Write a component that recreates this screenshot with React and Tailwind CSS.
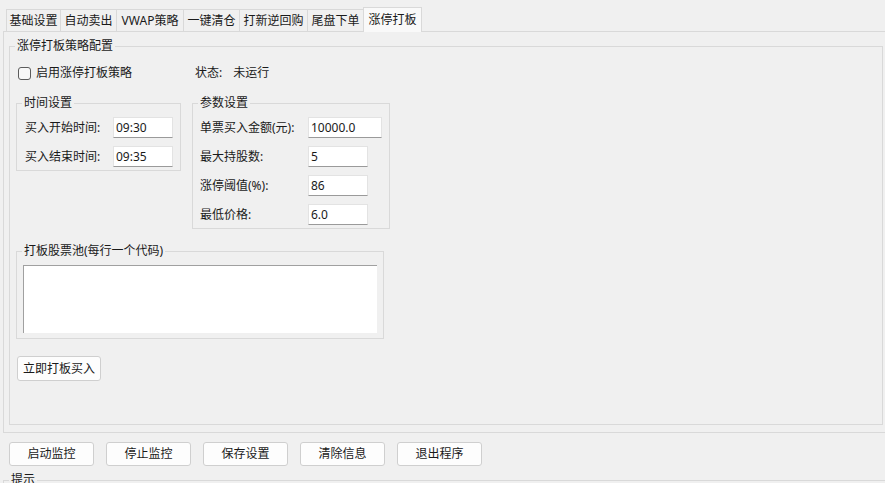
import React from "react";

const tabs = [
  { label: "基础设置", w: "w-[55px]" },
  { label: "自动卖出", w: "w-[57px]" },
  { label: "VWAP策略", w: "w-[68px]" },
  { label: "一键清仓", w: "w-[57px]" },
  { label: "打新逆回购", w: "w-[69px]" },
  { label: "尾盘下单", w: "w-[57px]" },
];

const Field = ({ value, w }) => (
  <div className={`${w} h-[21px] bg-white border border-[#e3e3e3] border-b-[#9a9a9a] pl-[2px] flex items-center text-[12px] text-[#1a1a1a]`}>
    {value}
  </div>
);

const Group = ({ title, className, children }) => (
  <fieldset className={`border border-[#d9d9d9] ${className}`}>
    <legend className="ml-[5px] px-[2px] leading-[16px] text-[12px] text-[#1a1a1a]">{title}</legend>
    {children}
  </fieldset>
);

const Btn = ({ children, className }) => (
  <button className={`h-[24px] rounded-[3px] border border-[#cfcfcf] bg-[#fdfdfd] text-[12px] text-[#1a1a1a] flex items-center justify-center ${className}`}>
    {children}
  </button>
);

export default function App() {
  return (
    <div className="w-[885px] h-[483px] overflow-hidden bg-[#f0f0f0] text-[#1a1a1a] text-[12px] font-['Noto_Sans','Noto_Sans_CJK_SC',sans-serif]">
      {/* tab strip */}
      <div className="h-[31px] flex items-end pl-[6px] relative z-10">
        {tabs.map((t) => (
          <div
            key={t.label}
            className={`${t.w} h-[22px] -mr-px border border-b-0 border-[#d9d9d9] bg-[#f0f0f0] flex items-center justify-center leading-none`}
          >
            {t.label}
          </div>
        ))}
        <div className="w-[59px] h-[25px] -mb-px border border-b-0 border-[#d9d9d9] bg-[#f9f9f9] flex items-center justify-center leading-none">
          涨停打板
        </div>
      </div>

      {/* pane */}
      <div className="ml-[3px] h-[402px] border-l border-t border-b border-[#d9d9d9] pt-[6px] pl-[5px]">
        <Group title="涨停打板策略配置" className="w-[874px] h-[387px]">
          <div className="pl-[6px]">
            <div className="h-[20px] mt-[9px] ml-[2px] flex items-center">
              <div className="w-[13px] h-[13px] rounded-[3px] border border-[#5c5c5c] bg-[#f8f8f8]" />
              <span className="ml-[5px] leading-none">启用涨停打板策略</span>
              <span className="ml-[63px] leading-none">状态:</span>
              <span className="ml-[11px] leading-none">未运行</span>
            </div>

            <div className="mt-[12px] flex items-start gap-[11px]">
              <Group title="时间设置" className="w-[165px]">
                <div className="pt-[6px] pb-[3px] pl-[8px] flex flex-col gap-[8px]">
                  <div className="flex items-center">
                    <span className="w-[88px]">买入开始时间:</span>
                    <Field value="09:30" w="w-[60px]" />
                  </div>
                  <div className="flex items-center">
                    <span className="w-[88px]">买入结束时间:</span>
                    <Field value="09:35" w="w-[60px]" />
                  </div>
                </div>
              </Group>

              <Group title="参数设置" className="w-[198px]">
                <div className="pt-[6px] pb-[3px] pl-[7px] flex flex-col gap-[8px]">
                  <div className="flex items-center">
                    <span className="w-[108px]">单票买入金额(元):</span>
                    <Field value="10000.0" w="w-[74px]" />
                  </div>
                  <div className="flex items-center">
                    <span className="w-[108px]">最大持股数:</span>
                    <Field value="5" w="w-[60px]" />
                  </div>
                  <div className="flex items-center">
                    <span className="w-[108px]">涨停阈值(%):</span>
                    <Field value="86" w="w-[60px]" />
                  </div>
                  <div className="flex items-center">
                    <span className="w-[108px]">最低价格:</span>
                    <Field value="6.0" w="w-[60px]" />
                  </div>
                </div>
              </Group>
            </div>

            <Group title="打板股票池(每行一个代码)" className="mt-[14px] w-[368px]">
              <div className="pt-[6px] pb-[5px] pl-[6px]">
                <div className="w-[354px] h-[68px] bg-white border-l border-t border-[#a0a0a0]" />
              </div>
            </Group>

            <button className="mt-[17px] ml-px w-[84px] h-[25px] rounded-[3px] border border-[#cfcfcf] bg-[#fdfdfd] text-[12px] flex items-center justify-center">
              立即打板买入
            </button>
          </div>
        </Group>
      </div>

      {/* bottom buttons */}
      <div className="mt-[9px] pl-[9px] flex gap-[12px]">
        <Btn className="w-[85px]">启动监控</Btn>
        <Btn className="w-[85px]">停止监控</Btn>
        <Btn className="w-[85px]">保存设置</Btn>
        <Btn className="w-[85px]">清除信息</Btn>
        <Btn className="w-[85px]">退出程序</Btn>
      </div>

      <Group title="提示" className="mt-[6px] ml-[3px] w-[900px] h-[40px]" />
    </div>
  );
}
